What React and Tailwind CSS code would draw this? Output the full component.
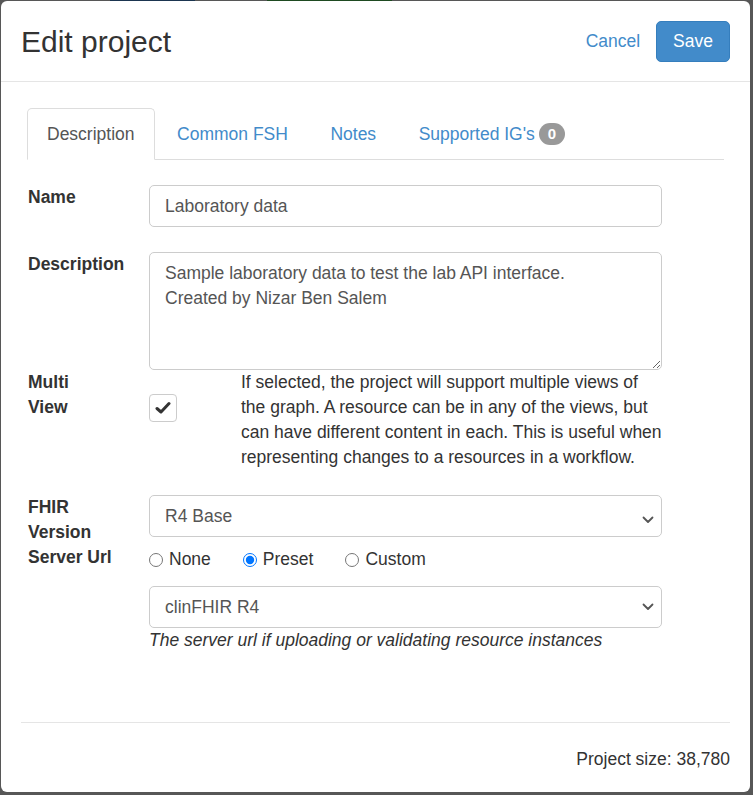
import React from 'react';

function Chevron() {
  return (
    <svg className="absolute right-[8px] top-1/2 -translate-y-1/2 pointer-events-none" width="12" height="8" viewBox="0 0 12 8">
      <path d="M1.5 1.5 L6 6 L10.5 1.5" fill="none" stroke="#555" strokeWidth="1.8" strokeLinecap="round" strokeLinejoin="round" />
    </svg>
  );
}

function Select({ value }) {
  return (
    <div className="relative w-[513px]">
      <select
        defaultValue={value}
        className="appearance-none w-full h-[42px] border border-[#ccc] rounded-[5px] px-[15px] bg-white text-[#555] text-[17.5px] outline-none"
      >
        <option>{value}</option>
      </select>
      <Chevron />
    </div>
  );
}

function Tab({ label, active, badge }) {
  if (active) {
    return (
      <div className="-mb-px mr-[2.5px] px-[19px] py-[12.5px] border border-[#ddd] border-b-white rounded-t-[5px] bg-white text-[#555]">
        {label}
      </div>
    );
  }
  return (
    <div className="-mb-px mr-[2.5px] px-[19px] py-[12.5px] border border-transparent text-[#428bca] flex items-center">
      {label}
      {badge !== undefined && (
        <span className="ml-[4px] h-[22px] min-w-[26px] px-[9px] rounded-full bg-[#999] text-white text-[15px] font-bold leading-[22px] text-center">
          {badge}
        </span>
      )}
    </div>
  );
}

function Radio({ label, checked }) {
  return (
    <label className="inline-flex items-center mr-[32px]">
      <input type="radio" name="server" defaultChecked={checked} className="m-0 w-[14px] h-[14px]" />
      <span className="ml-[6px]">{label}</span>
    </label>
  );
}

export default function App() {
  return (
    <div className="min-h-screen bg-[#575757] font-['Liberation_Sans',Arial,sans-serif] text-[17.5px] leading-[25px] text-[#333]">
      {/* bits of the page behind the backdrop */}
      <div className="flex h-px">
        <div className="w-[110px]" />
        <div className="w-[85px] bg-[#1b3550]" />
        <div className="w-[72px]" />
        <div className="w-[125px] bg-[#1e4a21]" />
      </div>

      <div className="ml-px w-[749px] h-[791px] bg-white rounded-[6px] flex flex-col">
        {/* header */}
        <div className="h-[81px] px-[20px] flex items-center justify-between border-b border-[#e5e5e5]">
          <h3 className="text-[30px] leading-[33px] font-normal">Edit project</h3>
          <div className="flex items-center">
            <span className="text-[#428bca] mr-[16px]">Cancel</span>
            <button className="h-[41px] px-[16px] rounded-[5px] bg-[#428bca] border border-[#357ebd] text-white">
              Save
            </button>
          </div>
        </div>

        {/* body */}
        <div className="flex-1 px-[26px] pt-[26px]">
          <div className="flex border-b border-[#ddd]">
            <Tab label="Description" active />
            <Tab label="Common FSH" />
            <Tab label="Notes" />
            <Tab label="Supported IG's" badge={0} />
          </div>

          <div className="ml-px">
            <div className="flex mt-[25px]">
              <div className="w-[121px] font-bold">Name</div>
              <input
                readOnly
                defaultValue="Laboratory data"
                className="w-[513px] h-[42px] border border-[#ccc] rounded-[5px] px-[15px] text-[#555] outline-none"
              />
            </div>

            <div className="flex mt-[25px]">
              <div className="w-[121px] font-bold">Description</div>
              <textarea
                readOnly
                defaultValue={'Sample laboratory data to test the lab API interface.\nCreated by Nizar Ben Salem'}
                className="w-[513px] h-[118px] border border-[#ccc] rounded-[5px] px-[15px] py-[7.5px] text-[#555] leading-[25px] outline-none"
              />
            </div>

            <div className="flex">
              <div className="w-[121px] font-bold">Multi<br />View</div>
              <div className="w-[92px]">
                <div className="mt-[24px] w-[28px] h-[28px] border border-[#ccc] rounded-[4px] flex items-center justify-center">
                  <svg width="16" height="14" viewBox="0 0 16 14">
                    <path d="M2 7.5 L6 11 L14 2.5" fill="none" stroke="#333" strokeWidth="3" strokeLinecap="round" strokeLinejoin="round" />
                  </svg>
                </div>
              </div>
              <p className="w-[425px] whitespace-nowrap">
                If selected, the project will support multiple views of<br />
                the graph. A resource can be in any of the views, but<br />
                can have different content in each. This is useful when<br />
                representing changes to a resources in a workflow.
              </p>
            </div>

            <div className="flex mt-[25px]">
              <div className="w-[121px] font-bold">FHIR<br />Version</div>
              <Select value="R4 Base" />
            </div>

            <div className="flex">
              <div className="w-[121px] font-bold">Server Url</div>
              <div>
                <div className="flex items-center h-[25px] mt-[2px]">
                  <Radio label="None" />
                  <Radio label="Preset" checked />
                  <Radio label="Custom" />
                </div>
                <div className="mt-[14px]">
                  <Select value="clinFHIR R4" />
                </div>
                <div className="italic text-[#333]">
                  The server url if uploading or validating resource instances
                </div>
              </div>
            </div>
          </div>
        </div>

        {/* footer */}
        <div className="mx-[20px] h-[70px] border-t border-[#e5e5e5] pt-[24px] text-right">
          Project size: 38,780
        </div>
      </div>
    </div>
  );
}
